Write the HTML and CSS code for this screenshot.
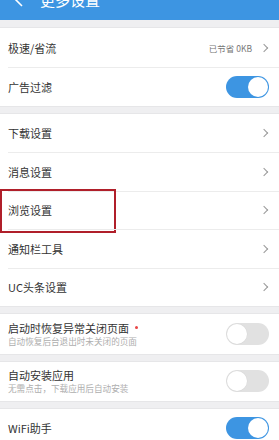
FILE: index.html
```html
<!DOCTYPE html>
<html lang="zh">
<head>
<meta charset="utf-8">
<link rel="stylesheet" href="styles.css">
</head>
<body>
<div class="page">
  <header class="topbar">
    <div class="topbar-inner">
      <svg class="back" width="10" height="14" viewBox="0 0 10 14"><path d="M8 1 L2 7 L8 13" fill="none" stroke="#fff" stroke-width="1.6"/></svg>
      <span class="title">更多设置</span>
    </div>
  </header>

  <section class="group">
    <div class="row">
      <span class="label">极速/省流</span>
      <span class="value">已节省 0KB</span>
      <span class="chev"></span>
    </div>
    <div class="row">
      <span class="label">广告过滤</span>
      <span class="toggle on"><span class="knob"></span></span>
    </div>
  </section>

  <section class="group list">
    <div class="row"><span class="label">下载设置</span><span class="chev"></span></div>
    <div class="row"><span class="label">消息设置</span><span class="chev"></span></div>
    <div class="row"><span class="label">浏览设置</span><span class="chev"></span><span class="highlight"></span></div>
    <div class="row"><span class="label">通知栏工具</span><span class="chev"></span></div>
    <div class="row"><span class="label">UC头条设置</span><span class="chev"></span></div>
  </section>

  <section class="group">
    <div class="row tall">
      <div class="texts">
        <span class="label">启动时恢复异常关闭页面<span class="dot"></span></span>
        <span class="sub">自动恢复后台退出时未关闭的页面</span>
      </div>
      <span class="toggle"><span class="knob"></span></span>
    </div>
  </section>

  <section class="group">
    <div class="row">
      <div class="texts">
        <span class="label">自动安装应用</span>
        <span class="sub">无需点击，下载应用后自动安装</span>
      </div>
      <span class="toggle"><span class="knob"></span></span>
    </div>
  </section>

  <section class="group">
    <div class="row">
      <span class="label">WiFi助手</span>
      <span class="toggle on"><span class="knob"></span></span>
    </div>
  </section>
</div>
</body>
</html>
```

FILE: styles.css
```css
* { box-sizing: border-box; }
html, body { margin: 0; padding: 0; }
body {
  background: #efeff1;
  font-family: "Noto Sans CJK SC", "Noto Sans", sans-serif;
  color: #333;
  width: 279px;
  height: 440px;
  overflow: hidden;
}
.page { display: flex; flex-direction: column; gap: 8px; }
.topbar {
  height: 20px;
  background: #3d95e2;
  overflow: hidden;
}
.topbar-inner {
  display: flex;
  align-items: center;
  height: 20px;
  margin-top: -10px;
  padding-left: 14px;
  gap: 16px;
  color: #fff;
}
.back { flex: none; }
.title { font-size: 15px; line-height: 20px; color: #fff; }
.group {
  background: #fff;
  display: flex;
  flex-direction: column;
  padding-left: 8px;
  box-shadow: 0 -1px 0 #e6e6e8, 0 1px 0 #e6e6e8;
}
.row {
  position: relative;
  display: flex;
  align-items: center;
  height: 39px;
  padding-right: 10px;
  border-top: 1px solid #ececec;
}
.row:first-child { border-top: none; }
.list .row { height: 38.4px; }
.row.tall { height: 40px; }
.label {
  font-size: 11px;
  line-height: 14px;
  color: #333;
  flex: 1;
  display: flex;
  align-items: center;
}
.texts { flex: 1; display: flex; flex-direction: column; gap: 1px; }
.sub { font-size: 8.6px; line-height: 11px; color: #aeaeae; }
.dot {
  width: 3px; height: 3px; border-radius: 50%;
  background: #e84545; margin-left: 6px; margin-top: -1px;
}
.value { font-size: 8.5px; color: #777; margin-right: 9px; }
.chev {
  width: 6px; height: 6px;
  border-top: 1.2px solid #999;
  border-right: 1.2px solid #999;
  transform: rotate(45deg);
  margin-right: 2px;
}
.toggle {
  width: 43px; height: 22px;
  border-radius: 11px;
  background: #e1e1e1;
  display: flex;
  align-items: center;
  padding: 1px;
  flex: none;
}
.toggle .knob {
  width: 20px; height: 20px; border-radius: 50%;
  background: #fff;
  box-shadow: 0 0 0 0.5px #d8d8d8;
}
.toggle.on { background: #3d95e2; justify-content: flex-end; }
.toggle.on .knob { box-shadow: none; }
.highlight {
  position: absolute;
  left: -8px; top: -3px;
  width: 116px; height: 44px;
  border: 2.5px solid #b01f2a;
  pointer-events: none;
}
```
